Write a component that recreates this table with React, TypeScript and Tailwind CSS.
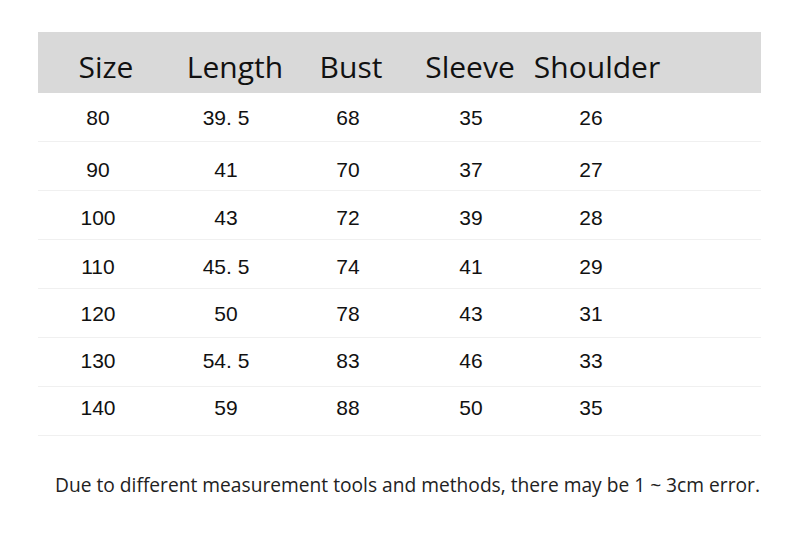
const columns = [
  { label: "Size", width: "w-[120px]", head: "pl-[16px]" },
  { label: "Length", width: "w-[136px]", head: "pl-[18px]" },
  { label: "Bust", width: "w-[108px]", head: "pl-[6px]" },
  { label: "Sleeve", width: "w-[138px]", head: "pr-[2px]" },
  { label: "Shoulder", width: "w-[102px]", head: "pl-[12px]" },
];

// small per-row vertical nudges to follow the original artwork
const rows = [
  { shift: "pt-[1px]", cells: ["80", "39. 5", "68", "35", "26"] },
  { shift: "pt-[7px]", cells: ["90", "41", "70", "37", "27"] },
  { shift: "pt-[5px]", cells: ["100", "43", "72", "39", "28"] },
  { shift: "pt-[6px]", cells: ["110", "45. 5", "74", "41", "29"] },
  { shift: "pt-[1px]", cells: ["120", "50", "78", "43", "31"] },
  { shift: "pb-[2px]", cells: ["130", "54. 5", "83", "46", "33"] },
  { shift: "pb-[6px]", cells: ["140", "59", "88", "50", "35"] },
];

export default function App() {
  return (
    <div className="w-[800px] h-[538px] bg-white pt-[32px] text-[#111]">
      <div className="ml-[38px] w-[723px]">
        <div className="flex h-[61px] items-center bg-[#d9d9d9] font-['Open_Sans',sans-serif] text-[30px]">
          {columns.map((c) => (
            <div key={c.label} className={`${c.width} flex shrink-0 justify-center whitespace-nowrap pt-[8px] ${c.head}`}>
              {c.label}
            </div>
          ))}
        </div>
        {rows.map((r, i) => (
          <div
            key={i}
            className={`flex h-[49px] items-center border-b-[1.5px] border-[#f0f0f0] font-['Liberation_Sans',Arial,sans-serif] text-[21px] ${r.shift}`}
          >
            {r.cells.map((v, j) => (
              <div key={j} className={`${columns[j].width} flex shrink-0 justify-center whitespace-pre`}>
                {v}
              </div>
            ))}
          </div>
        ))}
      </div>
      <p className="ml-[55px] mt-[35px] whitespace-nowrap font-['Open_Sans',sans-serif] text-[19.2px] text-[#222]">
        Due to different measurement tools and methods, there may be 1 ~ 3cm error.
      </p>
    </div>
  );
}
